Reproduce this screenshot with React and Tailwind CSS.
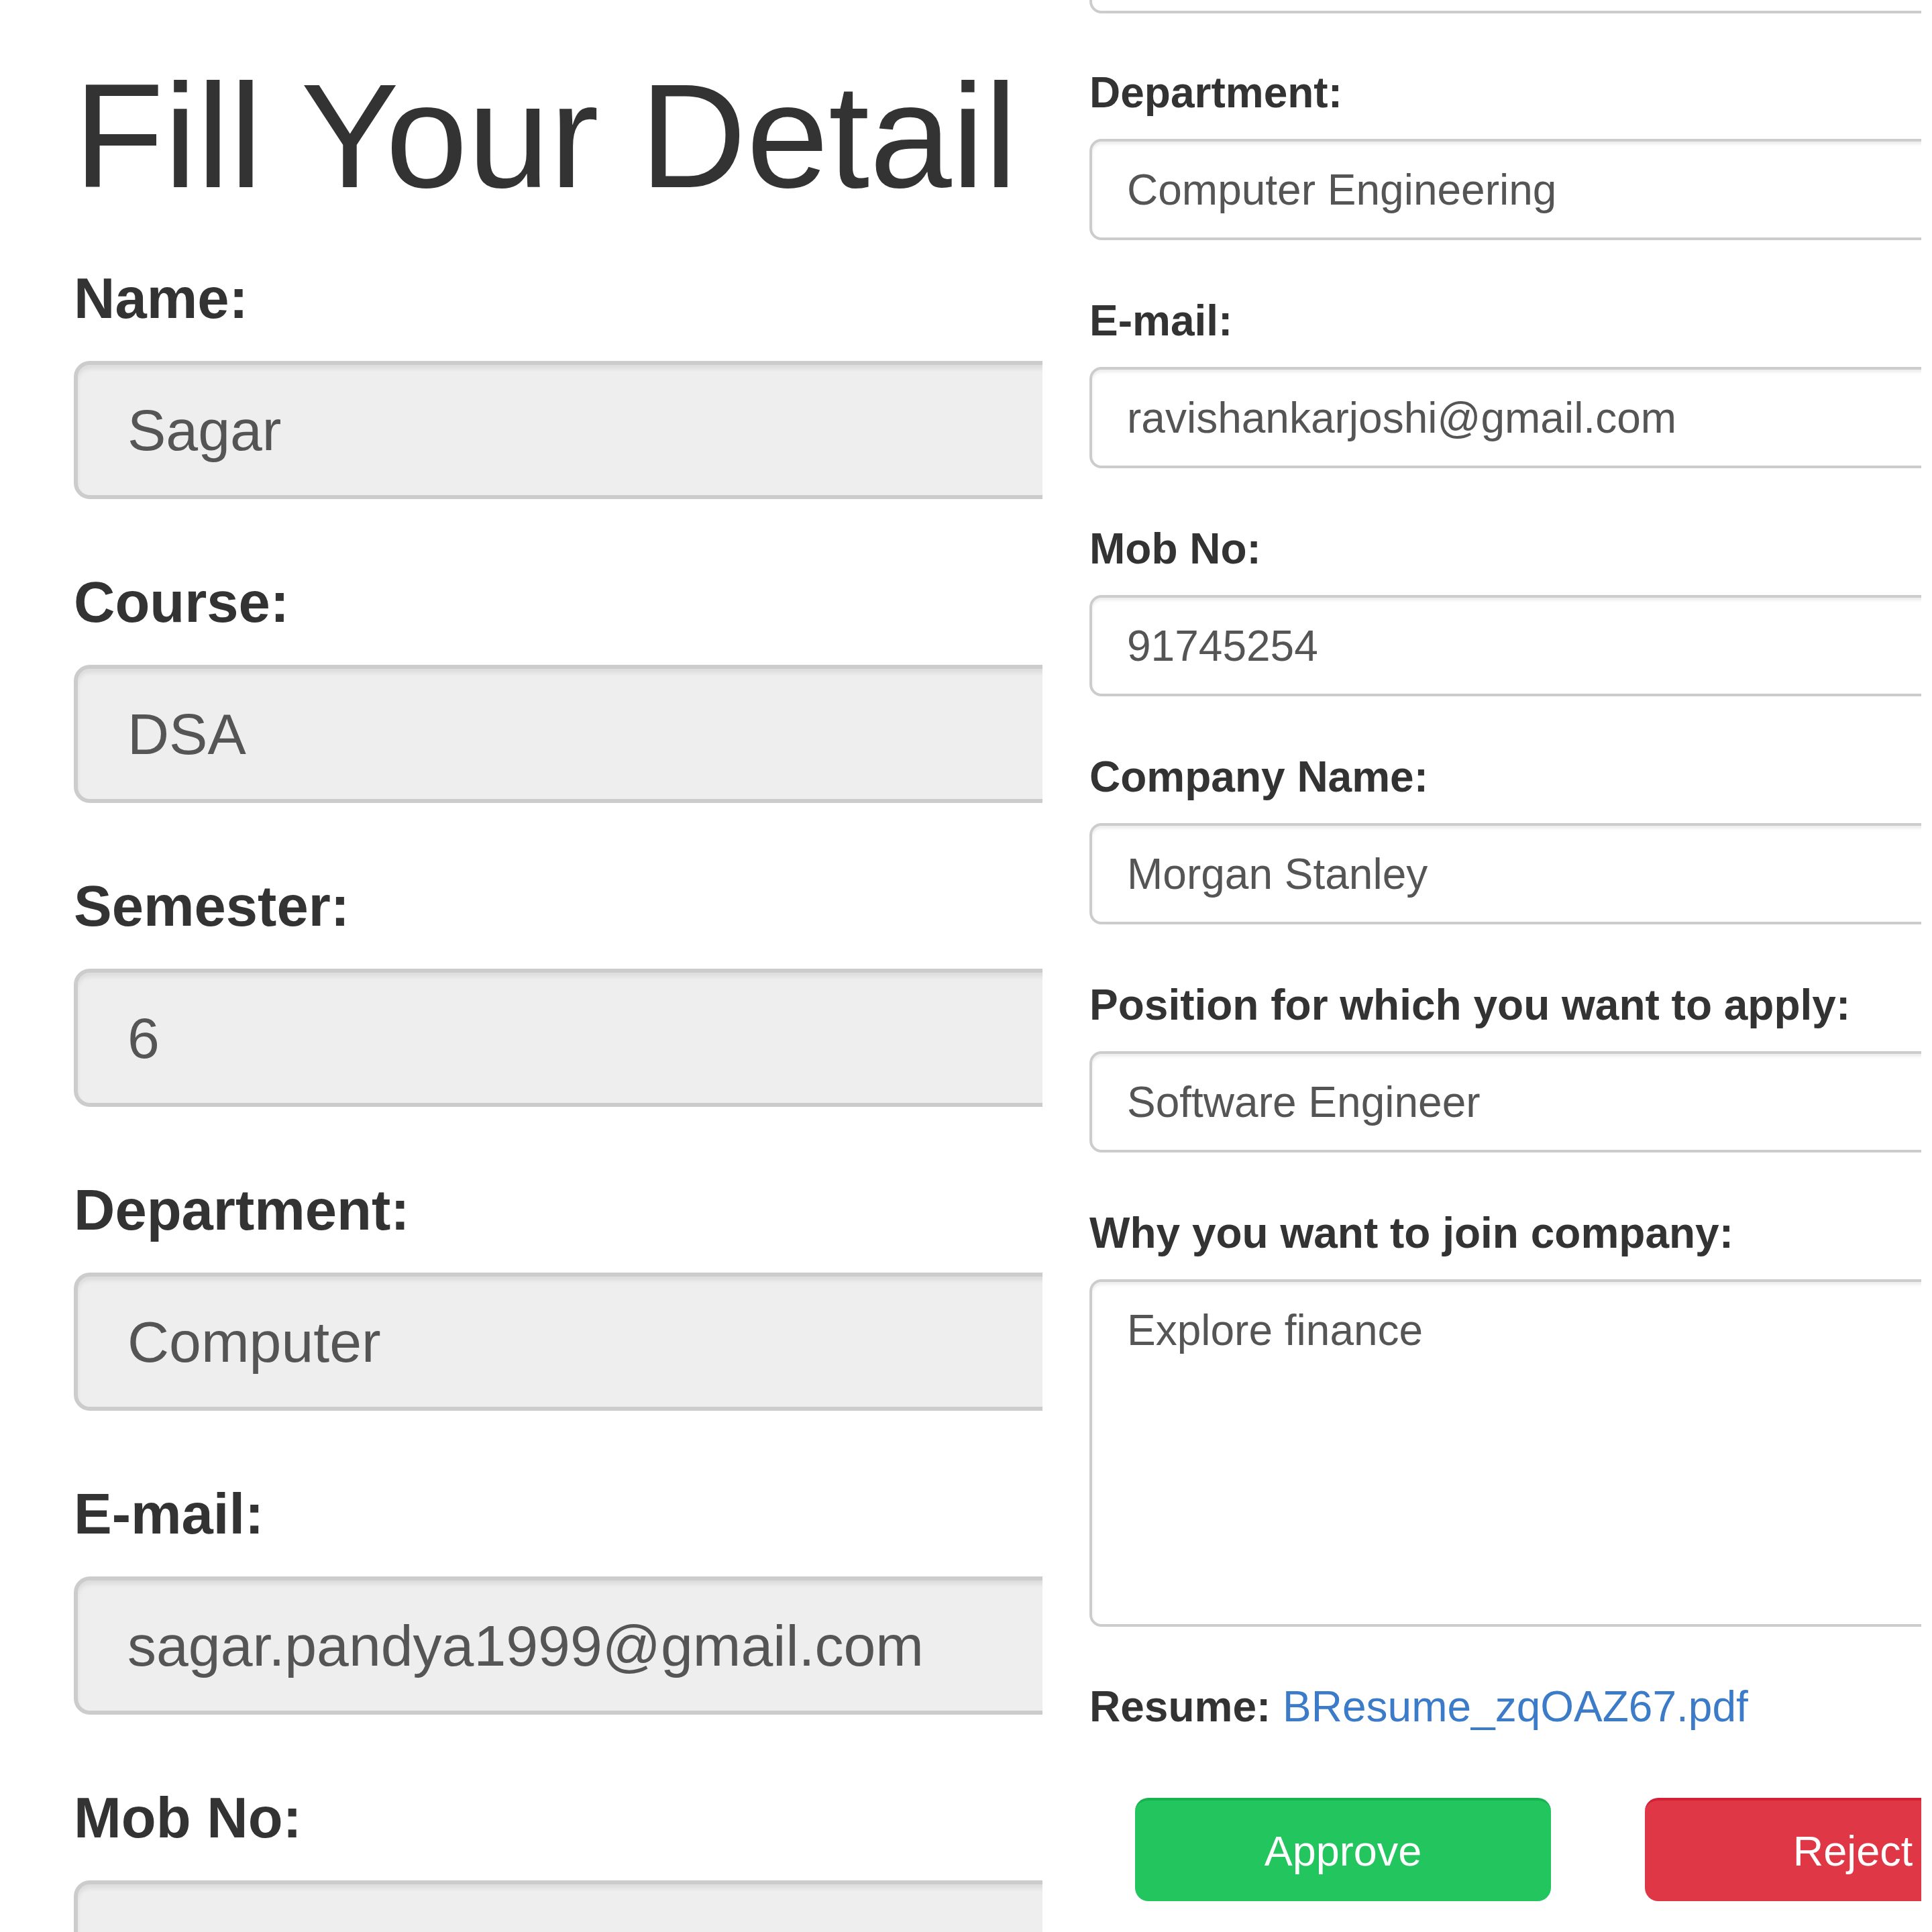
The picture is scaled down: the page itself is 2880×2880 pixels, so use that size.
import React from "react";

const FONT = { fontFamily: '"Liberation Sans", Arial, sans-serif' };

// left screenshot: the applicant's own (read-only) form, zoomed in
const studentFields = [
  ["Name:", "Sagar"],
  ["Course:", "DSA"],
  ["Semester:", "6"],
  ["Department:", "Computer"],
  ["E-mail:", "sagar.pandya1999@gmail.com"],
  ["Mob No:", ""],
];

// right screenshot: the application as the reviewer sees it
const applicationFields = [
  ["Department:", "Computer Engineering"],
  ["E-mail:", "ravishankarjoshi@gmail.com"],
  ["Mob No:", "91745254"],
  ["Company Name:", "Morgan Stanley"],
  ["Position for which you want to apply:", "Software Engineer"],
];

function BigField({ label, value }) {
  return (
    <div className="flex flex-col mb-[111px]">
      <label className="text-[85px] leading-none font-bold text-[#333] mb-[51px]">{label}</label>
      <input
        readOnly
        value={value}
        className="h-[206px] w-full shrink-0 rounded-[24px] border-[6px] border-[#ccc] bg-[#eee] pl-[74px] text-[86px] text-[#555] shadow-[inset_0_6px_6px_rgba(0,0,0,0.075)] outline-none"
      />
    </div>
  );
}

function SmallField({ label, value }) {
  return (
    <div className="flex flex-col mb-[88px]">
      <label className="text-[64px] leading-none font-bold text-[#333] mb-[37px]">{label}</label>
      <input
        readOnly
        value={value}
        className="h-[151px] w-full shrink-0 rounded-[18px] border-[4px] border-[#ccc] bg-white pl-[52px] text-[64px] text-[#555] shadow-[inset_0_4px_4px_rgba(0,0,0,0.075)] outline-none"
      />
    </div>
  );
}

export default function App() {
  return (
    <div className="w-[2880px] h-[2880px] overflow-hidden bg-white flex" style={FONT}>
      {/* left panel */}
      <div className="w-[1554px] h-full shrink-0 overflow-hidden pl-[110px]">
        <div className="w-[1700px] flex flex-col">
          <h1 className="text-[220px] leading-none font-normal text-[#333] pt-[93px] mb-[89px] whitespace-nowrap">
            Fill Your Detail
          </h1>
          {studentFields.map(([label, value]) => (
            <BigField key={label} label={label} value={value} />
          ))}
        </div>
      </div>

      {/* right panel */}
      <div className="w-[1310px] h-full shrink-0 overflow-hidden pl-[70px]">
        <div className="w-[1400px] flex flex-col">
          {/* bottom edge of the field above, scrolled out of view */}
          <div className="h-[151px] mt-[-131px] mb-[86px] rounded-[18px] border-[4px] border-[#ccc] bg-white" />

          {applicationFields.map(([label, value]) => (
            <SmallField key={label} label={label} value={value} />
          ))}

          <div className="flex flex-col">
            <label className="text-[64px] leading-none font-bold text-[#333] mb-[37px]">
              Why you want to join company:
            </label>
            <textarea
              readOnly
              value="Explore finance"
              className="h-[518px] w-full resize-none rounded-[18px] border-[4px] border-[#ccc] bg-white pl-[52px] pt-[27px] text-[64px] leading-[90px] text-[#555] shadow-[inset_0_4px_4px_rgba(0,0,0,0.075)] outline-none"
            />
          </div>

          <p className="mt-[87px] text-[64px] leading-none text-[#333] whitespace-nowrap">
            <span className="font-bold">Resume:</span>{" "}
            <a href="#" className="text-[#3b7bc8] no-underline">BResume_zqOAZ67.pdf</a>
          </p>

          <div className="flex gap-[140px] mt-[104px] ml-[68px]">
            <button className="w-[620px] h-[154px] shrink-0 rounded-[20px] bg-[#22c55e] border-t-[4px] border-[#16b34f] text-[63px] text-white">
              Approve
            </button>
            <button className="w-[620px] h-[154px] shrink-0 rounded-[20px] bg-[#e03747] border-t-[4px] border-[#d41f35] text-[63px] text-white">
              Reject
            </button>
          </div>
        </div>
      </div>
    </div>
  );
}
